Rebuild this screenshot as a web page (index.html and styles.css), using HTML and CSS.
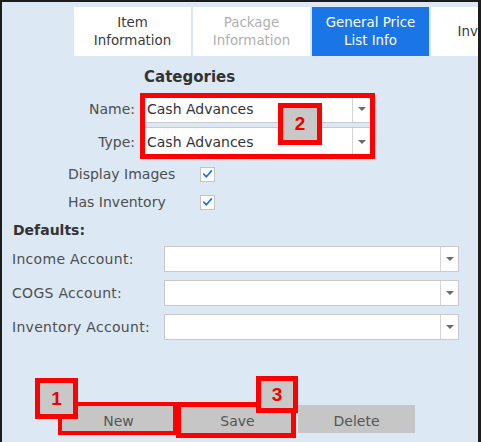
FILE: index.html
```html
<!DOCTYPE html>
<html>
<head>
<meta charset="utf-8">
<link rel="stylesheet" href="styles.css">
</head>
<body>
<div class="frame">
  <div class="tabs">
    <div class="tab tab-dark">Item<br>Information</div>
    <div class="tab tab-muted">Package<br>Information</div>
    <div class="tab tab-active">General Price<br>List Info</div>
    <div class="tab tab-dark">Inventory</div>
  </div>

  <section class="categories">
    <h2 class="cat-title">Categories</h2>
    <div class="cat-form">
      <div class="cat-row cat-row-name">
        <span class="cat-label">Name:</span>
        <div class="combo combo-cat"><span class="combo-text">Cash Advances</span><span class="combo-btn"><span class="arrow"></span></span></div>
      </div>
      <div class="cat-row cat-row-type">
        <span class="cat-label">Type:</span>
        <div class="combo combo-cat"><span class="combo-text">Cash Advances</span><span class="combo-btn"><span class="arrow"></span></span></div>
      </div>
    </div>
    <div class="checks">
      <div class="check-row">
        <span class="check-label">Display Images</span>
        <span class="cb"><svg viewBox="0 0 14 14" width="14" height="14"><path d="M3 7.2 L5.8 10 L11.2 3.6" fill="none" stroke="#1a73e8" stroke-width="1.8" stroke-linecap="round" stroke-linejoin="round"/></svg></span>
      </div>
      <div class="check-row">
        <span class="check-label">Has Inventory</span>
        <span class="cb"><svg viewBox="0 0 14 14" width="14" height="14"><path d="M3 7.2 L5.8 10 L11.2 3.6" fill="none" stroke="#1a73e8" stroke-width="1.8" stroke-linecap="round" stroke-linejoin="round"/></svg></span>
      </div>
    </div>
  </section>

  <section class="defaults">
    <h3 class="def-title">Defaults:</h3>
    <div class="def-form">
      <div class="def-row"><span class="def-label">Income Account:</span><div class="combo combo-def"><span class="combo-text"></span><span class="combo-btn"><span class="arrow"></span></span></div></div>
      <div class="def-row"><span class="def-label">COGS Account:</span><div class="combo combo-def"><span class="combo-text"></span><span class="combo-btn"><span class="arrow"></span></span></div></div>
      <div class="def-row"><span class="def-label">Inventory Account:</span><div class="combo combo-def"><span class="combo-text"></span><span class="combo-btn"><span class="arrow"></span></span></div></div>
    </div>
  </section>

  <div class="buttons">
    <div class="btn">New</div>
    <div class="btn">Save</div>
    <div class="btn">Delete</div>
  </div>

  <div class="mark mark-combos"></div>
  <div class="mark mark-new"></div>
  <div class="mark mark-save"></div>
  <div class="badge badge-2">2</div>
  <div class="badge badge-1">1</div>
  <div class="badge badge-3">3</div>
</div>
</body>
</html>
```
FILE: styles.css
```css
html, body {
  margin: 0;
  padding: 0;
}
body {
  width: 481px;
  height: 442px;
  overflow: hidden;
  font-family: "DejaVu Sans", "Liberation Sans", sans-serif;
  color: #4e4e4e;
}
.frame {
  box-sizing: border-box;
  position: relative;
  width: 481px;
  height: 442px;
  overflow: hidden;
  background: #dce9f5;
  border-top: 2px solid #1c1c1c;
  border-left: 2px solid #1c1c1c;
  border-right: 3px solid #1c1c1c;
}

/* tabs */
.tabs {
  display: flex;
  gap: 2px;
  margin-top: 5px;
  padding-left: 72px;
}
.tab {
  flex: 0 0 117px;
  height: 49px;
  display: flex;
  align-items: center;
  justify-content: center;
  text-align: center;
  background: #ffffff;
  font-size: 13.4px;
  line-height: 18px;
  white-space: nowrap;
}
.tab-dark { color: #3a3a3a; }
.tab-muted { color: #b0b0b0; }
.tab-active { background: #1a76e6; color: #ffffff; }

/* categories */
.cat-title {
  margin: 11px 0 0 142px;
  font-size: 15px;
  line-height: 20px;
  font-weight: bold;
  color: #333333;
}
.cat-form {
  display: flex;
  flex-direction: column;
  gap: 4px;
  margin-top: 8px;
}
.cat-row {
  display: flex;
  align-items: center;
  gap: 8px;
}
.cat-row-name { height: 28px; }
.cat-row-type { height: 30px; }
.cat-label {
  width: 133px;
  text-align: right;
  font-size: 14px;
}
.combo {
  box-sizing: border-box;
  display: flex;
  align-items: stretch;
  height: 100%;
  background: #ffffff;
  border: 1px solid #c9c9c9;
}
.combo-cat { width: 228px; }
.combo-text {
  flex: 1;
  display: flex;
  align-items: center;
  padding-left: 3px;
  font-size: 14px;
  color: #333333;
}
.combo-btn {
  flex: 0 0 17px;
  display: flex;
  align-items: center;
  justify-content: center;
  border-left: 1px solid #d4d4d4;
}
.arrow {
  width: 0;
  height: 0;
  border-left: 4px solid transparent;
  border-right: 4px solid transparent;
  border-top: 4px solid #6b6b6b;
}

/* checkboxes */
.checks {
  margin-top: 3px;
  padding-left: 66px;
}
.check-row {
  display: flex;
  align-items: center;
  height: 28px;
}
.check-label {
  width: 132px;
  font-size: 14px;
}
.cb {
  box-sizing: border-box;
  width: 15px;
  height: 15px;
  display: flex;
  align-items: center;
  justify-content: center;
  background: #ffffff;
  border: 1px solid #c4c4c4;
}

/* defaults */
.def-title {
  margin: 4px 0 0 11px;
  font-size: 14px;
  line-height: 20px;
  font-weight: bold;
  color: #333333;
}
.def-form {
  display: flex;
  flex-direction: column;
  gap: 8px;
  margin-top: 6px;
  padding-left: 10px;
}
.def-row {
  display: flex;
  align-items: center;
  height: 26px;
}
.def-label {
  width: 152px;
  font-size: 14px;
  letter-spacing: 0.3px;
}
.combo-def { width: 295px; }

/* buttons */
.buttons {
  display: flex;
  gap: 2px;
  margin-top: 65px;
  padding-left: 58px;
}
.btn {
  flex: 0 0 117px;
  height: 28px;
  display: flex;
  align-items: center;
  justify-content: center;
  padding-top: 3px;
  box-sizing: border-box;
  background: #c6c6c6;
  font-size: 14px;
  color: #555555;
}

/* annotations */
.mark {
  position: absolute;
  box-sizing: border-box;
  border: 5px solid #ff0000;
}
.mark-combos { left: 138px; top: 91px; width: 235px; height: 66px; }
.mark-new { left: 56px; top: 400px; width: 119px; height: 33px; border-width: 4px; }
.mark-save { left: 174px; top: 400px; width: 120px; height: 36px; }
.badge {
  position: absolute;
  box-sizing: border-box;
  display: flex;
  align-items: center;
  justify-content: center;
  background: #c8c8c8;
  border: 5px solid #ff0000;
  color: #ee0000;
  font-family: "Liberation Sans", Arial, sans-serif;
  font-weight: bold;
  font-size: 19px;
}
.badge-2 { left: 276px; top: 101px; width: 44px; height: 42px; }
.badge-1 { left: 33px; top: 376px; width: 43px; height: 41px; }
.badge-3 { left: 254px; top: 374px; width: 42px; height: 37px; }
```
